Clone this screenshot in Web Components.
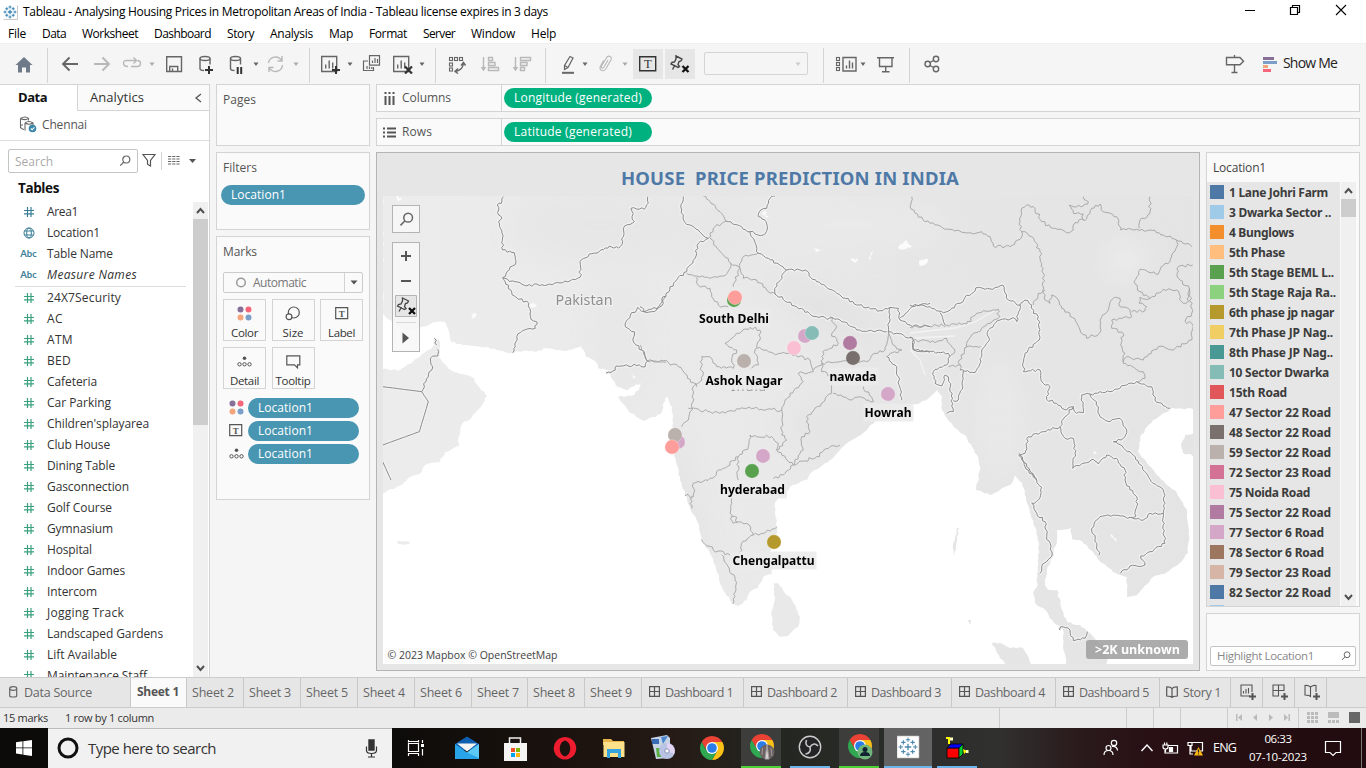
<!DOCTYPE html>
<html lang="en">
<head>
<meta charset="utf-8">
<title>Tableau - Analysing Housing Prices</title>
<style>
html,body{margin:0;height:768px;overflow:hidden}
body{font-family:"Open Sans","Noto Sans",sans-serif;font-size:12px;color:#333}
</style>
</head>
<body>
<desktop-app></desktop-app>
<script>
const define = (name, css, html, after) => customElements.define(name, class extends HTMLElement {
  constructor(){ super(); this.attachShadow({mode:'open'}); }
  connectedCallback(){
    this.shadowRoot.innerHTML = `<style>*{box-sizing:border-box}:host{display:block;box-sizing:border-box}svg{display:block;flex:none}${css}</style>` + (typeof html === 'function' ? html(this) : html);
    if (after) after(this);
  }
});
/* svg whose user space is the window's own pixel grid */
const ic = (x,y,w,h,inner,extra='') => `<svg width="${w}" height="${h}" viewBox="${x} ${y} ${w} ${h}" fill="none" stroke="#666" stroke-width="1.4" ${extra}>${inner}</svg>`;
/* flex row: each entry is [start, width, markup]; the gap before it becomes a margin */
const row = (start, list) => { let p = start; return list.map(([x,w,h,c=''])=>{ const m=x-p; p=x+w; return `<div class="c ${c}" style="width:${w}px;margin-left:${m}px">${h}</div>`; }).join(''); };
const t = (s,w,style='') => `<fit-text w="${w}" style="${style}">${s}</fit-text>`;

/* text tracked to an exact advance */
customElements.define('fit-text', class extends HTMLElement {
  constructor(){ super(); this.attachShadow({mode:'open'}).innerHTML='<style>:host{display:inline-block;white-space:pre;flex:none}</style><slot></slot>'; }
  connectedCallback(){
    const w=+this.getAttribute('w'), n=this.textContent.length; if(!w||!n) return;
    const r=this.getBoundingClientRect().width;
    this.style.letterSpacing=((w-r)/n).toFixed(3)+'px';
  }
});

const tableau = (cx,cy,s,c='#3b86b5') => { const p=(x,y,r,w)=>`<path stroke-width="${w}" d="M${cx+x-r} ${cy+y}h${2*r}M${cx+x} ${cy+y-r}v${2*r}"/>`;
  return `<g stroke="${c}">${p(0,0,2.2*s,1.3)}${[[0,-5],[0,5],[-5,0],[5,0]].map(a=>p(a[0]*s,a[1]*s,1.5*s,1)).join('')}${[[-3.2,-3.2],[3.2,-3.2],[-3.2,3.2],[3.2,3.2]].map(a=>p(a[0]*s,a[1]*s,1.5*s,1.1)).join('')}</g>`; };

define('title-bar', `:host{height:24px;background:#fff;display:flex;align-items:center;color:#000}.c{height:24px;display:flex;align-items:center}fit-text{margin-top:-2px}`, () => row(0,[
  [3,15,ic(3,4,15,15,`<path d="M3.5 18.5h14v-14" stroke="#c9c9c9" stroke-width="1"/>`+tableau(10,11,1))],
  [23,525,t('Tableau - Analysing Housing Prices in Metropolitan Areas of India - Tableau license expires in 3 days',525)],
  [1244,12,ic(1244,4,12,12,'<path d="M1245 10.5h10" stroke="#000" stroke-width="1"/>','style="margin-top:-4px"')],
  [1289,12,ic(1289,4,12,12,'<path d="M1290.5 7.500h7v7h-7zM1292.500 7v-1.500h7v7h-1.500" stroke="#000" stroke-width="1.200"/>','style="margin-top:-4px"')],
  [1335,12,ic(1335,4,12,12,'<path d="M1336 5l10 10m0-10l-10 10" stroke="#000" stroke-width="1.100"/>','style="margin-top:-4px"')]]));

define('menu-bar', `:host{height:19px;background:#fff;display:flex;gap:16px;padding-left:8px;color:#000;line-height:19px}`, () =>
  [['File',18],['Data',24],['Worksheet',56],['Dashboard',57],['Story',27],['Analysis',43],['Map',24],['Format',38],['Server',32],['Window',44],['Help',25]].map(a=>t(...a)).join(''));

const caret=(x,c='#666')=>ic(x-4,54,8,20,`<path d="M${x-2.5} 62.500h5l-2.500 3.500z" fill="${c}" stroke="none"/>`);
const tsep='<i></i>';
const chart=(x,y)=>`<path d="M${x} ${y}h15v15h-15zM${x+4} ${y+12}v-4M${x+7.500} ${y+12}v-8M${x+11} ${y+12}v-6"/>`;
const squares=a=>a.map(([x,y])=>`<rect x="${x}" y="${y}" width="3" height="3" stroke-width="1.100"/>`).join('');
const pin=(x,y)=>`<path d="M${x+4} ${y}l6 3-1 2-2 .5-1 3 1.500 2-1.500 1-7-3.500 1-1.500 2.500-.5 1.500-3zM${x+3} ${y+9}l-2.500 4.500"/><path d="M${x+10.500} ${y+10}l6 6m0-6l-6 6" stroke="#111" stroke-width="2.300"/>`;
define('tool-bar', `:host{height:41px;background:#f5f5f5;border-top:1px solid #efefef;display:flex}.c{height:40px;display:flex;align-items:center;justify-content:center;color:#222}
 i{width:1px;height:35px;background:#d4d4d4;margin-top:2px}.on{height:30px;background:#e6e6e6;margin-top:5px}.combo{height:23px;border:1px solid #d4d4d4;border-radius:2px;margin-top:8px;justify-content:flex-end;padding-right:5px}`, () => row(0,[
  [14,20,ic(14,54,20,20,'<path d="M24 57l8.500 8h-2.500v7.500h-4v-5h-4v5h-4v-7.500h-2.500z" fill="#6f7b89" stroke="none"/>')],
  [47,1,tsep],
  [60,20,ic(60,54,20,20,'<path d="M78 64h-15M69.500 57.500l-6.500 6.500 6.500 6.500" stroke-width="1.900"/>')],
  [92,20,ic(92,54,20,20,'<path d="M94 64h15M102.500 57.500l6.500 6.500-6.500 6.500" stroke="#b8b8b8" stroke-width="1.900"/>')],
  [121,22,ic(121,54,22,20,'<path d="M131 66.500h6.500q3 0 3-3t-3-3M128 66.500q-4.500 0-4.500-3.200t3.500-2.800h9M133.500 57.500l3 3-3 3" stroke="#b8b8b8"/>')],
  [148,8,caret(152.500,'#aaa')],
  [165,18,ic(165,54,18,20,'<path d="M166.700 56.700h14.800v14.800h-14.800zM169.700 71v-4.500h8v4.500M172.500 71v-2.500"/>')],
  [197,18,ic(197,54,18,20,'<ellipse cx="205" cy="58.500" rx="5" ry="2"/><path d="M200 58.500v10q0 2 4 2M210 58.500v6"/><path d="M205 70h8M209 66v8" stroke="#333" stroke-width="2"/>')],
  [228,18,ic(228,54,18,20,'<ellipse cx="235.500" cy="58.500" rx="5" ry="2"/><path d="M230.500 58.500v10q0 2 4 2M240.500 58.500v6"/><path d="M237.700 67v7M241.200 67v7" stroke="#333" stroke-width="2"/>')],
  [252,8,caret(256)],
  [266,19,ic(266,54,19,20,'<path d="M268.500 63a7 7 0 0 1 13-2.500M282.500 65a7 7 0 0 1-13 3M282 56v5h-4.500M269 72v-4.500h4.500" stroke="#b8b8b8"/>')],
  [292,8,caret(296,'#aaa')],
  [309,1,tsep],
  [320,21,ic(320,54,21,20,chart(321.700,56.500)+'<path d="M332 70h8M336 66v8" stroke="#333" stroke-width="2"/>')],
  [346,8,caret(350)],
  [362,19,ic(362,54,19,20,'<path d="M369.500 55.700h10v9.500h-10zM372.500 63v-2.500M375 63v-5M377.500 63v-4M368 61h-4.500v9.500h10V67M367 69v-3M369.500 69v-2.500M371.800 69v-2" stroke-width="1.200"/>')],
  [392,21,ic(392,54,21,20,chart(393.700,56.500)+'<path d="M405 66.500l7 7m0-7l-7 7" stroke="#333" stroke-width="2.200"/>')],
  [418,8,caret(422)],
  [435,1,tsep],
  [448,19,ic(448,54,19,20,squares([[449.500,57.500],[454.500,57.500],[459.500,57.500],[449.500,63],[449.500,68]])+'<path d="M463.500 63q-.5 7-8 8.500M461 65.500l2.500-3 2 3M458 68.500l-3 3 3 2"/>')],
  [480,20,ic(480,54,20,20,'<path d="M483.500 57v12.500M481.500 67l2 3 2-3M488.500 57.500h4v3h-4zM488.500 62.500h6.500v3h-6.500zM488.500 67.500h10v3h-10z" stroke="#b8b8b8"/>')],
  [512,20,ic(512,54,20,20,'<path d="M515.500 57v12.500M513.500 67l2 3 2-3M520.500 57.500h10v3h-10zM520.500 62.500h6.500v3h-6.500zM520.500 67.500h4v3h-4z" stroke="#b8b8b8"/>')],
  [545,1,tsep],
  [560,16,ic(560,54,16,20,'<path d="M570 56.500l3 1.500-5 9.500-3.500 2v-4zM564.500 65.500l3.500 2" stroke-width="1.200"/><path d="M562 72.800h12" stroke-width="2"/>')],
  [581,8,caret(585)],
  [598,15,ic(598,54,15,20,'<path d="M608 60l-4 7q-1 1.500-2 1t-.5-2l5.500-9q1.500-1.500 3.200-.5t1 3l-5.500 9.500q-1.700 2.500-4 1.500t-1.500-4l3.500-6" stroke="#b8b8b8" stroke-width="1.100"/>')],
  [621,8,caret(625,'#aaa')],
  [633,30,ic(638,55,20,18,'<path d="M639.700 56.700h16v14h-16z" stroke="#333"/><text x="647.700" y="68.300" font-family="Liberation Serif" font-size="12.500" text-anchor="middle" fill="#333" stroke="none">T</text>'),'on'],
  [665,30,ic(670,54,20,20,`<g stroke="#444">${pin(672,56)}</g>`),'on'],
  [704,104,caret(800,'#ccc'),'combo'],
  [823,1,tsep],
  [835,22,ic(835,54,22,20,squares([[836.500,57.500],[836.500,62.500],[836.500,67.500]])+'<path d="M843 57.500h13v13.500h-13zM846.500 68.500v-3M849.500 68.500v-8M852.500 68.500v-6"/>')],
  [859,8,caret(863)],
  [876,20,ic(876,54,20,20,'<path d="M877 57.800h17M879.500 58v8.500h12.500V58M885.700 67v5M882 71.800h7.500"/>')],
  [909,1,tsep],
  [924,16,ic(924,54,16,20,'<circle cx="927.700" cy="64" r="2.700"/><circle cx="936" cy="59" r="2.700"/><circle cx="936" cy="69" r="2.700"/><path d="M930 62.500l3.500-2M930 65.500l3.500 2"/>','stroke-linecap="round"')],
  [1225,20,ic(1225,54,20,20,'<path d="M1226.500 57.500h13.500l3.500 3.700-3.500 3.500h-13.500zM1234.500 55v2.500M1234.500 65v8M1231.500 72.500h6"/>')],
  [1263,14,ic(1263,55,14,17,'<g stroke="none"><path fill="#876f97" d="M1263 56h11v3h-11z"/><path fill="#7c9fca" d="M1263 60h14v3h-14z"/><path fill="#f5a57c" d="M1263 64h5v3h-5z"/><path fill="#f6657a" d="M1263 68h8v3h-8z"/></g>')],
  [1283,54,t('Show Me',54,'font-size:14px;margin-top:-3px')]]));

const hash=c=>`<svg width="12" height="12" viewBox="0 0 12 12" fill="none" stroke="${c}" stroke-width="1.200"><path d="M4.500 1v10M8 1v10M1 4.500h10M1 7.800h10"/></svg>`;
const globe='<svg width="12" height="12" viewBox="0 0 12 12" fill="none" stroke="#3a7e98"><circle cx="6" cy="6" r="5"/><ellipse cx="6" cy="6" rx="2.300" ry="5"/><path d="M1.500 4h9M1.500 8h9"/></svg>';
const abc='<span style="font:bold 9.500px Lato,sans-serif;color:#3a7e98">Abc</span>';
define('field-row', `:host{height:21px;display:flex;align-items:center;color:#333}.i{width:17px;display:flex;justify-content:center;margin:0 10px 0 20px}`, h=>{
  const k=h.getAttribute('kind'); return `<div class="i">${k=='geo'?globe:k=='abc'?abc:hash(k=='dim'?'#3a7e98':'#3aa17e')}</div><slot></slot>`});
const fr=(k,s,w,st='')=>`<field-row kind="${k}">${t(s,w,st)}</field-row>`;
define('scroll-bar', `:host{background:#f0f0f0;display:flex;flex-direction:column}.t{background:#cdcdcd}`, h=>`<svg width="15" height="17"><path d="M4 11l3.500-4 3.500 4" fill="none" stroke="#505050" stroke-width="2"/></svg><div class="t" style="height:${h.getAttribute('thumb')}px"></div><svg style="margin-top:auto" width="15" height="17"><path d="M4 6l3.500 4L11 6" fill="none" stroke="#505050" stroke-width="2"/></svg>`);
const lens=(s=12)=>`<svg width="${s}" height="${s}" viewBox="0 0 12 12" fill="none" stroke="#666" stroke-width="1.200"><circle cx="7.300" cy="4.500" r="3.500"/><path d="M4.800 7L1.200 10.700"/></svg>`;

define('data-pane', `:host{width:210px;height:593px;border-right:1px solid #d4d4d4;border-top:1px solid #d4d4d4;background:#fff;display:flex;flex-direction:column;overflow:hidden}
 .tabs{display:flex;height:26px;font-size:13px;line-height:25px;flex:none;color:#333}.a{width:77px;padding-left:18px;font-weight:700;color:#111}.b{flex:1;border-left:1px solid #d4d4d4;border-bottom:1px solid #d4d4d4;background:#fafafa;padding-left:12px;display:flex;align-items:center}
 .ds{height:30px;border-bottom:1px solid #dedede;display:flex;align-items:center;padding:0 0 2px 19px;gap:5px;flex:none;color:#555}
 .s{display:flex;align-items:center;padding:8px 0 0 8px;height:32px;flex:none}.box{width:130px;height:24px;border:1px solid #c4c4c4;border-radius:2px;display:flex;align-items:center;padding:0 6px 0 6px;justify-content:space-between;color:#aaa}
 h3{margin:0;font-size:13.500px;line-height:31px;padding-left:18px;color:#111;height:29px;flex:none}
 .w{display:flex;height:475px;flex:none}.l{width:193px;overflow:hidden}.l field-row:first-child{margin-top:-1px}hr{border:0;height:1px;background:#dcdcdc;margin:1px 7px 0 15px}scroll-bar{width:15px}`, () => `
 <div class="tabs"><div class="a">${t('Data',29)}</div><div class="b">${t('Analytics',54)}<svg width="8" height="10" style="margin-left:50px"><path d="M7 1L2 5l5 4" fill="none" stroke="#555" stroke-width="1.300"/></svg></div></div>
 <div class="ds">${ic(19,117,18,17,'<path d="M20.500 119.500q5-3 8 0v2M20.500 119.500v9q2 2 3.500 2M20.500 119.500q4 2 7 .500M25 124q4-3 8 0v4M25 124q4 2.500 8 0M25 124v7.500M21 126h2" stroke-width="1.100"/><circle cx="32.500" cy="129.500" r="3.800" fill="#3a87a6" stroke="none"/><path d="M30.800 129.500l1.300 1.300 2.300-2.500" stroke="#fff" stroke-width="1.100"/>')}${t('Chennai',45)}</div>
 <div class="s"><div class="box">${t('Search',38)}${lens(12)}</div><svg width="14" height="14" viewBox="0 0 14 14" style="margin-left:4px;margin-top:-2px"><path d="M1 1.500h12L8.500 7.500v5.500l-3-1.800V7.500z" fill="none" stroke="#555" stroke-width="1.200"/></svg><svg width="40" height="18" style="margin-left:5px;margin-top:-1px"><path d="M.5 0v18" stroke="#d4d4d4"/><path d="M7 4.500h12M7 7h12M7 9.500h12M7 12h12" stroke="#666" stroke-dasharray="3.200 1" stroke-width="1.200"/><path d="M28 7h7l-3.500 4z" fill="#555"/></svg></div>
 <h3>${t('Tables',41)}</h3>
 <div class="w"><div class="l">${fr('dim','Area1',31)}${fr('geo','Location1',53)}${fr('abc','Table Name',66)}${fr('abc','<em>Measure Names</em>',90)}<hr>${[['24X7Security',74],['AC',16],['ATM',26],['BED',24],['Cafeteria',50],['Car Parking',64],["Children'splayarea",102],['Club House',63],['Dining Table',68],['Gasconnection',82],['Golf Course',65],['Gymnasium',66],['Hospital',45],['Indoor Games',78],['Intercom',50],['Jogging Track',77],['Landscaped Gardens',116],['Lift Available',70],['Maintenance Staff',100]].map(a=>fr('m',...a)).join('')}</div><scroll-bar thumb="206"></scroll-bar></div>`);

const dots4=(s=1)=>`<svg width="${15*s}" height="${15*s}" viewBox="0 0 15 15"><circle cx="3.500" cy="3.500" r="3" fill="#876f97"/><circle cx="11.500" cy="3.500" r="3" fill="#f6657a"/><circle cx="3.500" cy="11.500" r="3" fill="#f5a57c"/><circle cx="11.500" cy="11.500" r="3" fill="#7c9fca"/></svg>`;
const label='<svg width="14" height="13"><path d="M.7.700h12v11h-12z" fill="none" stroke="#555" stroke-width="1.200"/><text x="6.800" y="9.500" font-size="9" font-family="Liberation Serif" text-anchor="middle" font-weight="bold" fill="#555">T</text></svg>';
const detail='<svg width="15" height="11" fill="none" stroke="#555"><circle cx="7.500" cy="2.200" r="1.800" fill="#555" stroke="none"/><circle cx="2.500" cy="8.300" r="1.700"/><circle cx="7.500" cy="8.300" r="1.700"/><circle cx="12.500" cy="8.300" r="1.700"/></svg>';
const sizeI='<svg width="16" height="15" fill="none" stroke="#555" stroke-width="1.200"><circle cx="8.800" cy="6.500" r="5.500"/><circle cx="4" cy="10.800" r="2.900" fill="#fafafa"/></svg>';
const tip='<svg width="15" height="14" fill="none" stroke="#555" stroke-width="1.200"><path d="M.8.800h13v9h-2.300v3l-3-3H.8z"/></svg>';
define('shelf-pill', `:host{height:20px;border-radius:10px;background:#4996b2;color:#fff;line-height:19px;padding-left:11px}`, '<slot></slot>');
define('side-card', `:host{background:#fafafa;border:1px solid #d4d4d4;padding:6px 0 0 6px;color:#555}.h{height:19px;line-height:18px}`, h=>`<div class="h"><slot name="title"></slot></div><slot></slot>`);
define('mark-button', `:host{width:43px;height:42px;border:1px solid #d4d4d4;background:#fafafa;color:#333;display:flex;flex-direction:column;align-items:center}.i{height:27px;display:flex;align-items:center}.l{line-height:11px}`, '<div class="i"><slot name="icon"></slot></div><div class="l"><slot></slot></div>');
const mb=(i,s,w)=>`<mark-button><span slot="icon">${i}</span>${t(s,w,'font-size:11.500px')}</mark-button>`;
define('cards-column', `:host{width:154px;display:flex;flex-direction:column;gap:6px}shelf-pill{width:144px;margin:7px 0 0 -2px;padding-left:10px}.sel{margin-top:10px;width:140px;height:21px;border:1px solid #ccc;border-radius:2px;display:flex;align-items:center}.sel b{width:18px;height:19px;border-left:1px solid #d4d4d4;margin-left:auto;display:flex;align-items:center;justify-content:center}
 .g{display:grid;grid-template-columns:43px 43px 43px;gap:6px 5.500px;margin-top:6px}.r{display:flex;align-items:center;height:23px}.r .i{width:26px;display:flex;justify-content:center}.r shelf-pill{width:111px;margin:0 0 0 -1px;padding-left:10px}.rows{margin-top:7px}`, () => `
 <side-card style="height:62px">${`<span slot="title">${t('Pages',33)}</span>`}</side-card>
 <side-card style="height:78px"><span slot="title">${t('Filters',34)}</span><shelf-pill>${t('Location1',55)}</shelf-pill></side-card>
 <side-card style="height:264px"><span slot="title">${t('Marks',34)}</span>
 <div class="sel"><svg width="12" height="12" style="margin:0 6px 0 11px"><circle cx="6" cy="5.500" r="4.300" fill="none" stroke="#999" stroke-width="1.500"/></svg>${t('Automatic',53,'color:#777')}<b><svg width="8" height="5"><path d="M.5.500h7L4 4.500z" fill="#555"/></svg></b></div>
 <div class="g">${mb(dots4(),'Color',27)}${mb(sizeI,'Size',21)}${mb(label,'Label',27)}${mb(detail,'Detail',29)}${mb(tip,'Tooltip',35)}</div>
 <div class="rows">${[dots4(),label,detail].map(i=>`<div class="r"><div class="i">${i}</div><shelf-pill>${t('Location1',55)}</shelf-pill></div>`).join('')}</div></side-card>`);

define('shelf-row', `:host{height:28px;border:1px solid #d4d4d4;background:#fafafa;display:flex;align-items:center;color:#555}.n{width:125px;height:26px;border-right:1px solid #d4d4d4;display:flex;align-items:center;gap:6px;padding-left:6px}.n fit-text{margin-top:-1px}shelf-pill{background:#00b180;width:148px;margin-left:2px;padding-left:10px}`, h=>{
  const c=h.getAttribute('kind')=='c'; return `<div class="n"><svg width="13" height="13" fill="none" stroke="#555" stroke-width="2">${c?'<path d="M2.500 0v2M2.500 4v9M6.500 0v2M6.500 4v9M10.500 0v2M10.500 4v9"/>':'<path d="M0 2.500h2M4 2.500h9M0 6.500h2M4 6.500h9M0 10.500h2M4 10.500h9"/>'}</svg>${c?t('Columns',49):t('Rows',30)}</div><shelf-pill>${c?t('Longitude (generated)',128,'font-size:12px'):t('Latitude (generated)',118)}</shelf-pill>`});

/* ---- map ---- */
let seed=7; const rnd=()=>{seed=(seed*16807)%2147483647;return seed/2147483647-.5};
function rough(pts,amp,close,step=2.5){
  const out=[]; if(close) pts=[...pts,pts[0]];
  for(let i=0;i<pts.length-1;i++){ const [x1,y1]=pts[i],[x2,y2]=pts[i+1],dx=x2-x1,dy=y2-y1,d=Math.hypot(dx,dy),n=Math.max(1,Math.round(d/step)); out.push([x1,y1]);
    for(let k=1;k<n;k++){const f=k/n,j=rnd()*amp*2;out.push([x1+dx*f-dy/d*j,y1+dy*f+dx/d*j]);} }
  out.push(pts[pts.length-1]);
  return 'M'+out.map(p=>p.map(v=>v.toFixed(1)).join(' ')).join('L')+(close?'Z':'');
}
const P=s=>s.trim().split(/\s+/).map(a=>a.split(',').map(Number));
const land=['383,190 383,314 393,323 405,331 419,328 436,322 445,322 449,332 451,342 466,345 486,347 508,353 523,351 536,352 546,348 563,351 581,346 585,353 586,357 596,362 598,368 609,370 611,377 618,387 626,390 641,383 639,390 631,396 618,397 629,412 644,421 661,414 665,398 668,397 672,407 673,423 673,437 674,453 680,477 688,503 698,523 702,540 712,557 722,587 732,603 738,606 747,600 750,592 758,588 763,577 772,574 772,563 770,552 777,533 775,503 790,487 807,480 812,472 830,460 847,443 863,433 870,425 882,417 903,407 920,403 930,397 937,390 942,397 942,410 948,420 955,428 965,435 972,447 977,455 980,470 976,490 990,495 1000,490 1012,483 1015,475 1022,483 1027,503 1035,527 1039,543 1038,570 1037,587 1033,593 1035,603 1043,608 1052,620 1063,630 1063,647 1067,670 1107,670 1107,650 1090,633 1080,625 1067,622 1062,610 1057,590 1048,590 1045,583 1047,570 1053,553 1057,540 1057,530 1071,528 1072,539 1082,541 1093,552 1102,563 1113,572 1127,577 1127,597 1137,595 1153,577 1167,572 1180,563 1188,553 1189,530 1187,510 1177,493 1157,475 1147,463 1138,452 1140,437 1153,420 1173,408 1196,409 1196,190',
 '1196,432 1185,435 1181,445 1183,453 1196,456',
 '380,369 400,370 418,358 434,345 438,338 440,345 438,357 449,369 460,374 472,377 480,388 487,396 480,408 472,417 462,424 458,440 459,446 445,452 440,462 425,465 420,474 410,477 402,485 380,494',
 '773,583 778,583 783,590 792,600 800,617 798,627 788,636 780,637 773,630 771,613 775,597',
 '992,643 1000,643 1010,648 1023,648 1033,668 1007,668 997,653',
 '957,528 959,528 956,546 953,557 953,545','397,541 410,542 409,544 398,544','968,620 971,620 970,625'];
const lakes=['902,244 906,240 912,246 906,249 898,248','850,260 858,258 855,263','869,258 873,251 868,263','919,261 928,259 925,265 920,266','472,315 476,313 474,321','529,302 537,306 532,308','631,373 637,377 633,379','757,212 767,212 762,216 769,217','1110,534 1119,542 1116,541','813,249 821,251 816,252','396,195 402,198 398,201','1094,451 1097,454 1093,455'];
const borders={
 '376,190':['382,20 376,40 364,45 368,75 378,85 368,95 378,130 380,180 415,188 420,215 380,263','380,263 445,286 520,282 560,278 612,262 612,215 640,192 670,185 700,168 728,174 740,155 742,115 775,95 765,55 805,58 817,40 815,20','380,263 415,318 458,340 465,388 482,395 478,415 440,422 422,440 418,470 410,488','690,550 718,540 720,528 790,524 808,530 815,512 798,480 775,460 775,425 748,410 750,395 785,352 805,365 850,352 870,318','20,590 137,605','137,605 150,575 160,545 170,530 163,505 185,498 185,478','175,445 182,465','137,605 157,635','157,635 130,725','130,725 20,765','20,815 45,870'],
 '640,190':['0,350 12,365 50,360 78,310 115,262 140,245 165,205 175,160 205,145 175,120 135,98 125,60 130,20','265,95 330,125 355,190 385,205 440,240 410,280 405,312','330,125 370,135 382,118 378,95 355,80 362,60 380,55 390,25 405,18','440,240 495,240 530,275 590,310 650,345 720,362 750,352 775,355','405,312 470,350 530,380 600,390 650,420 740,425','750,352 745,425 770,430 820,445','775,355 780,390 810,405 870,410','780,385 815,350 870,340','820,450 822,480 870,487','740,500 770,530 785,630'],
 '910,190':['0,345 60,350 100,368 150,340 165,322 205,292 240,297 278,285 295,330 330,345 345,330 365,345 370,370 385,380 388,450 345,490 340,545 390,540 400,580 420,590 410,628 440,640 470,660 490,650 500,670 520,668 515,615 540,612 600,605 650,585 680,575 725,590 735,630 780,655','330,345 320,380 320,395 310,383 270,390 235,420 235,455 215,480 215,500 195,548 150,540','90,368 105,405','0,440 10,450 10,480 115,490 120,500 110,525 70,545 75,580 95,588 105,555 115,560 128,640 130,665 110,670','160,542 158,590 145,630 130,632','490,650 465,680 450,710 400,725 355,740 345,790 330,795 350,830 380,870','450,710 465,745 490,745 495,790 488,835 550,808 565,822 590,795 620,805 645,840 645,870','540,612 565,650 570,680 600,695 630,685 650,720 640,745 610,755 660,785 720,868'],
 '900,430':['358,70 375,110 410,150 425,172 415,210 395,220 410,250 435,275 440,320 457,372 425,410 420,430','675,150 678,160 710,200 708,258 690,262 640,255 600,260 575,295 590,340 597,375','750,148 790,180 795,220 790,250 750,250 730,270 695,262','790,250 795,340 750,365 722,378 735,405 690,408 662,430','478,600 482,590 510,600 520,632 555,625 562,605']};
const states={
 '376,190':['815,512 870,517'],
 '640,190':['205,145 225,110 265,95 240,65 205,30 190,18','210,145 245,190 272,220 300,235 280,290','272,220 262,250 210,265 170,258 140,250','170,262 175,285 210,295 215,320 235,345 265,350','300,235 310,200 355,190','300,235 310,265 350,270 380,300 405,312','570,380 590,410 575,430 595,460 548,485 548,520 520,540','545,520 600,515 680,515 705,490 735,480 745,425','745,425 760,465 785,480 740,500','545,520 545,545 580,560 575,610 555,630 500,680 510,725 485,740 490,780 460,825','580,610 630,630 660,620 700,635 670,590','255,460 290,430 330,412 360,420 360,450 345,480 355,525 335,535','255,460 290,480 275,510 280,535 230,530 215,505 185,500 185,570 160,590 155,650','350,475 400,490 445,490 510,510 520,545 475,550 490,575 450,610 425,660','0,465 20,512 70,512 115,530 170,590','145,655 240,670 320,655 425,660 425,735 440,750 410,780','155,650 145,690 125,710','330,735 350,740 395,740 415,760 410,780 460,825','330,735 325,770 295,800 295,870','460,825 530,800 570,770 600,765','460,825 430,855 400,865'],
 '630,400':['165,287 190,290 190,250 240,235 280,205 325,170','185,290 185,325','300,290 305,310 300,340 310,370 350,370 370,405 335,430 330,465','305,350 320,352 322,370','370,405 400,400 440,382','215,418 250,450 300,465','275,465 295,500 315,540 315,590 308,612'],
 '910,190':['5,20 0,50 45,95 120,118 190,132 215,125 240,140 250,168 300,170 330,148 335,125 330,95 335,55 350,45 375,55 395,95 430,115 470,128 490,120 495,98 530,85 545,55 570,42 580,65 620,80 632,120 680,118 720,120 760,135 800,150 845,170','520,90 520,72 490,70 478,45 520,48 535,35 520,20','720,20 720,70 690,90 688,115','335,125 365,140 390,185 400,250 405,330 420,340 425,315 445,330 455,355 480,370 510,420 530,445 568,430 570,390 595,360 610,325 630,325 630,350 660,360 665,380 605,390 605,415 640,430 632,465 645,490 640,520 700,545 705,565 680,575','405,300 385,310 370,345','800,150 800,170 780,215 765,220 745,252 690,238 672,275 690,305 720,325 760,298 800,300 820,340 835,335 838,295 805,265 805,230 848,225','720,325 690,322 688,340 710,350 705,362 665,365','838,295 845,370 825,395 845,400 845,450 790,480 745,470 700,510 650,500 640,515','0,412 50,408 170,402 200,370 265,358','265,358 265,385 240,400 185,435 165,475','10,450 75,458 110,445 135,485 120,500','150,540 148,510 170,470 212,470','115,530 150,525']};
const straight=new Set(['20,590 137,605','137,605 157,635','157,635 130,725','130,725 20,765','20,815 45,870']);
const lines=(o,a)=>Object.entries(o).map(([k,l])=>{const [ox,oy]=k.split(',').map(Number);return l.map(s=>rough(P(s).map(([x,y])=>[ox+x/3,oy+y/3]),straight.has(s)?0:a)).join('')}).join('');
const marks=[[734,300,'#59a14f'],[735,297.500,'#ff9d9a'],[805,336,'#d4a6c8'],[812,333,'#86bcb6'],[794,348,'#fabfd2'],[744,361,'#bab0ac'],[850,343,'#b07aa1'],[853,358,'#79706e'],[888,394,'#d4a6c8'],[678,442,'#d4a6c8'],[675,435,'#bab0ac'],[672,447,'#ff9d9a'],[763,456,'#d4a6c8'],[752,471,'#59a14f'],[774,542,'#b6992d']];
const labels=[['South Delhi',734,318,70],['Ashok Nagar',744,380.500,77],['nawada',853,376.500,47],['Howrah',888,412.500,47],['hyderabad',752.500,489.500,65],['Chengalpattu',773.500,560.500,82]];
define('map-view', `:host{width:810px;height:468px;position:relative;overflow:hidden;background:#fff}
 .ctl{position:absolute;left:9px;width:28px;border:1px solid #b4b4b4;background:rgba(247,247,247,.9)}.find{top:9px;height:28px;display:flex;align-items:center;justify-content:center}.nav{top:46px;height:110px}
 .attr{position:absolute;left:2px;bottom:1px;height:15px;width:175px;background:rgba(250,250,250,.85);font-size:10.500px;line-height:14px;padding-left:2.500px;color:#444}
 .unk{position:absolute;right:5px;bottom:5px;width:102px;height:19px;border-radius:3px;background:rgba(160,160,160,.88);color:#fff;font-weight:700;font-size:12.500px;line-height:19px;padding-left:9px}`, ()=>{
  const L=land.map(s=>rough(P(s),.9,true,3)).join('');
  const C=lines(borders,1.400), S=lines(states,1.600);
  return `<svg width="810" height="468" viewBox="383 196 810 468">
  <defs><filter id="b" x="-40%" y="-40%" width="180%" height="180%"><feGaussianBlur stdDeviation="14"/></filter><clipPath id="k"><path d="${L}"/></clipPath>
  <linearGradient id="g"><stop offset="0" stop-color="#ececec"/><stop offset=".5" stop-color="#e9e9e9"/><stop offset=".65" stop-color="#e6e6e6"/><stop offset="1" stop-color="#e4e4e4"/></linearGradient></defs>
  <path d="${L}" fill="url(#g)"/>
  <g clip-path="url(#k)"><g filter="url(#b)"><ellipse cx="600" cy="225" rx="90" ry="35" fill="#e6e6e6"/><ellipse cx="620" cy="340" rx="25" ry="60" fill="#e7e7e7"/><ellipse cx="683" cy="500" rx="10" ry="70" fill="#e2e2e2" transform="rotate(-14 683 500)"/><ellipse cx="835" cy="425" rx="50" ry="22" fill="#e4e4e4"/><ellipse cx="720" cy="230" rx="40" ry="35" fill="#e6e6e6"/><ellipse cx="850" cy="225" rx="100" ry="25" fill="#e9e9e9"/><ellipse cx="1125" cy="260" rx="25" ry="20" fill="#ebebeb"/><ellipse cx="1000" cy="420" rx="20" ry="60" fill="#e9e9e9"/><ellipse cx="820" cy="306" rx="60" ry="9" fill="#dedede" transform="rotate(28 820 306)"/></g>
  <path d="M910 333l45-5 20-6 20-12M915 338l40-2M910 350l10 10 5 15" fill="none" stroke="#f3f3f3" stroke-width="1.300"/></g>
  <path d="${lakes.map(s=>rough(P(s),1.300,true)).join('')}" fill="#fbfbfb"/>
  <g fill="none" stroke-linejoin="round"><path d="${C}" stroke="#f1f1f1" stroke-width="3.500"/><path d="${S}" stroke="#9a9a9a" stroke-width=".8"/><path d="${C}" stroke="#8b8b8b" stroke-width="1"/></g>
  <g font-family="Noto Sans,sans-serif"><text x="393" y="218" font-size="14" fill="#ddd">Iran</text><text x="555.500" y="305" font-size="14" textLength="57" lengthAdjust="spacingAndGlyphs" fill="#8f8f8f" stroke="#efefef" stroke-width="2.500" paint-order="stroke">Pakistan</text><text x="731" y="391" font-size="13" textLength="35" fill="#999">India</text>
  ${marks.map(([x,y,c])=>`<circle cx="${x}" cy="${y}" r="7.200" fill="${c}" stroke="#fff" stroke-opacity=".35" stroke-width=".8"/>`).join('')}
  ${labels.map(([s,x,y,w])=>`<rect x="${x-w/2-1}" y="${y-9}" width="${w+3}" height="18" fill="#ebebeb" fill-opacity=".9"/><text x="${x-w/2}" y="${y+4.500}" font-size="12.500" font-weight="700" fill="#000" textLength="${w}" lengthAdjust="spacingAndGlyphs">${s}</text>`).join('')}</g></svg>
  <div class="ctl find">${lens(15)}</div>
  <div class="ctl nav"><svg width="26" height="108" viewBox="393 243 26 108" fill="none" stroke="#555"><path d="M401 256h10M406 251v10M401 281h10" stroke-width="2"/><path d="M395.500 295.500h21v21h-21z" fill="#e6e6e6" stroke="#b4b4b4"/><g stroke="#444" stroke-width="1.300" transform="translate(1.500 0)">${pin(397,298)}</g><path d="M396 322.500h20" stroke="#d9d9d9"/><path d="M402.500 332.500l6.500 5.500-6.500 5.500z" fill="#555" stroke="none"/></svg></div>
  <div class="attr">${t('© 2023 Mapbox © OpenStreetMap',170)}</div><div class="unk">${t('>2K unknown',85)}</div>`});

define('sheet-canvas', `:host{width:824px;height:519px;background:#e6e6e6;border:1px solid #b4b4b4;padding-left:6px}h1{margin:0;height:43px;line-height:50px;font-size:18.500px;color:#4e79a7;text-align:center;width:810px;padding-left:4px;font-family:"Noto Sans",sans-serif}`, ()=>`<h1>${t('HOUSE  PRICE PREDICTION IN INDIA',338)}</h1><map-view></map-view>`);

define('color-legend', `:host{width:154px;height:455px;border:1px solid #d4d4d4;background:#fafafa;color:#444}.h{height:29px;line-height:29px;padding-left:6px}.b{display:flex;height:424px}.l{width:133px;background:#e6e6e6;overflow:hidden}.r{display:flex;align-items:center;height:20px;gap:5px;padding-left:3px;font-weight:700;font-size:12px;color:#3c3c3c;font-family:"Noto Sans",sans-serif}.r i{width:14px;height:14px}scroll-bar{width:15px;margin-left:1px}`, ()=>`<div class="h">${t('Location1',53)}</div><div class="b"><div class="l">${[['#4e79a7','1 Lane Johri Farm',99],['#a0cbe8','3 Dwarka Sector ..',102],['#f28e2b','4 Bunglows',65],['#ffbe7d','5th Phase',56],['#59a14f','5th Stage BEML L..',105],['#8cd17d','5th Stage Raja Ra..',107],['#b6992d','6th phase jp nagar',105],['#f1ce63','7th Phase JP Nag..',104],['#499894','8th Phase JP Nag..',104],['#86bcb6','10 Sector Dwarka',100],['#e15759','15th Road',58],['#ff9d9a','47 Sector 22 Road',102],['#79706e','48 Sector 22 Road',102],['#bab0ac','59 Sector 22 Road',102],['#d37295','72 Sector 23 Road',102],['#fabfd2','75 Noida Road',81],['#b07aa1','75 Sector 22 Road',102],['#d4a6c8','77 Sector 6 Road',95],['#9d7660','78 Sector 6 Road',95],['#d7b5a6','79 Sector 23 Road',102],['#4e79a7','82 Sector 22 Road',102],['#a0cbe8','',0]].map(([c,s,w])=>`<div class="r"><i style="background:${c}"></i>${s?t(s,w):''}</div>`).join('')}</div><scroll-bar thumb="18"></scroll-bar></div>`);
define('highlight-card', `:host{width:154px;height:58px;border:1px solid #d4d4d4;background:#fafafa;padding:32px 3px 0}.x{height:20px;border:1px solid #c4c4c4;border-radius:2px;background:#fff;display:flex;align-items:center;justify-content:space-between;padding:0 4px 0 6px;color:#888;font-size:11.500px}fit-text{margin-top:-1px}`, ()=>`<div class="x">${t('Highlight Location1',97)}${lens(10)}</div>`);

define('work-area', `:host{height:593px;background:#f5f5f5;display:flex}.m{flex:1;display:flex;flex-direction:column;gap:6px;margin:0 6px}cards-column{margin-left:6px}.v{display:flex;gap:6px}.s{display:flex;flex-direction:column;gap:6px}`, `<data-pane></data-pane><cards-column></cards-column><div class="m"><shelf-row kind="c"></shelf-row><shelf-row></shelf-row><div class="v"><sheet-canvas></sheet-canvas><div class="s"><color-legend></color-legend><highlight-card></highlight-card></div></div></div>`);

const grid='<svg width="11" height="11" fill="none" stroke="#555" stroke-width="1.200" style="margin-top:-2px"><path d="M.6.600h9.800v9.800H.6zM5.500 0v11M0 5.500h11"/></svg>';
const book='<svg width="12" height="12" fill="none" stroke="#555" stroke-width="1.200" style="margin-top:-2px"><path d="M6 2.500Q3.500.500.700 1v9l4 .500L6 11.500l1.300-1 4-.5V1Q8.500.500 6 2.500v9"/></svg>';
const plus='<path d="M9 12.500h7M12.500 9v7" stroke="#555" stroke-width="2"/>';
define('sheet-tabs', `:host{height:31px;background:#e6e6e6;border-top:1px solid #ccc;border-bottom:1px solid #ccc;display:flex;color:#666}.c{height:29px;border-right:1px solid #c8c8c8;display:flex;align-items:center;gap:5px;padding-left:5px;font-size:12.500px}.c.src{padding-left:9px;gap:6px}.on{background:#fafafa;font-weight:700;font-size:12px;color:#555;padding:0 0 2px 6px}.n{padding-left:9px}`, ()=>{
 let x=0; const a=[[131,`<svg width="9" height="12" fill="none" stroke="#666" stroke-width="1.200" style="margin-top:-2px"><ellipse cx="4.200" cy="2.500" rx="3.500" ry="1.800"/><path d="M.7 2.500v7.500q0 1 3.500 1t3.500-1V2.500"/></svg>`+t('Data Source',68),'src'],[187,t('Sheet 1',42),'on']];
 [[2,244],[3,301],[5,358],[4,415],[6,472],[7,528],[8,585],[9,642]].forEach(([n,e])=>a.push([e,t('Sheet '+n,42)]));
 [744,848,952,1056,1160].forEach((e,i)=>a.push([e,'<span style="width:2px;margin-right:-5px"></span>'+grid+t('Dashboard '+(i+1),i?70:68)]));
 a.push([1231,'<span style="width:1px;margin-right:-5px"></span>'+book+t('Story 1',38)]);
 a.push([1263,`<svg width="17" height="17" fill="none" stroke="#555"><path d="M10 12H1V1h11v7M3.500 9.500V7M6 9.500V5M8.500 9.500V4" stroke-width="1.100"/>${plus}</svg>`,'n']);
 a.push([1295,`<svg width="17" height="17" fill="none" stroke="#555"><path d="M7 12H1V1h11v6M6.500 1v11M1 6.500h11" stroke-width="1.100"/>${plus}</svg>`,'n']);
 a.push([1327,`<svg width="17" height="17" fill="none" stroke="#555"><path d="M6.500 3Q4 1 1 1.500V11l4 .5 1.500 1V3Q9 1 12 1.500V8" stroke-width="1.100"/>${plus}</svg>`,'n']);
 return a.map(([e,h,c=''])=>{const w=e-x;x=e;return `<div class="c ${c}" style="width:${w}px">${h}</div>`}).join('')});

define('status-bar', `:host{height:20px;background:#ebebeb;display:flex;color:#333;font-size:11px}.c{height:20px;display:flex;align-items:center}.s{background:#ccc}fit-text{margin-top:-1px}`, ()=>row(0,[[3,46,t('15 marks',45)],[65,90,t('1 row by 1 column',89)],[999,1,'','s'],[1126,1,'','s'],[1153,1,'','s'],[1180,1,'','s'],[1227,1,'','s'],
 [1235,56,ic(1235,710,56,16,'<path d="M1236 714h1.500v7h-1.500zM1242 714v7l-4-3.500zM1257 714v7l-4-3.500zM1269 714v7l4-3.500zM1284 714v7l4-3.500zM1288.500 714h1.500v7h-1.500z" fill="#bbb" stroke="none"/>')],[1298,1,'','s'],
 [1307,54,ic(1307,710,54,16,'<g stroke="none" fill="#bbb"><path d="M1307 712h3v3h-3zM1311 712h3v3h-3zM1315 712h3v3h-3zM1307 716h3v3h-3zM1311 716h3v3h-3zM1315 716h3v3h-3zM1307 720h3v3h-3zM1311 720h3v3h-3zM1315 720h3v3h-3zM1328 712h11v6h-11zM1328 720h3v3h-3zM1332 720h3v3h-3zM1336 720h3v3h-3z"/><path d="M1349 712h11v11h-11z" fill="#666"/></g>')]]));

const chrome=(cx,cy,r)=>{const p=a=>[cx+r*Math.cos(a*Math.PI/180),cy+r*Math.sin(a*Math.PI/180)].map(v=>v.toFixed(2)).join(' '),q=a=>[cx+r*.5*Math.cos(a*Math.PI/180),cy+r*.5*Math.sin(a*Math.PI/180)].map(v=>v.toFixed(2)).join(' ');
 return `<g stroke="none"><path fill="#ea4335" d="M${p(210)}A${r} ${r} 0 0 1 ${p(330)}L${q(270)}L${q(150)}Z"/><path fill="#fbc116" d="M${p(330)}A${r} ${r} 0 0 1 ${p(90)}L${q(30)}L${q(270)}Z"/><path fill="#30a852" d="M${p(90)}A${r} ${r} 0 0 1 ${p(210)}L${q(150)}L${q(30)}Z"/><circle cx="${cx}" cy="${cy}" r="${r*.5}" fill="#fff"/><circle cx="${cx}" cy="${cy}" r="${r*.4}" fill="#2a7de9"/></g>`};
define('task-bar', `:host{height:40px;display:flex;background:linear-gradient(90deg,#0c0b0a 0,#0e0c0a 400px,#1a120e 560px,#261b16 680px,#23251f 760px,#2b2d2b 900px,#30302f 1000px,#2a1a1b 1080px,#281014 1150px,#210b0e 1366px);color:#fff}.c{height:40px;display:flex;align-items:center}.q{background:#f1f1f1;border-top:1px solid #bbb;color:#333;font-size:15px}.q fit-text{margin-top:-2px}.g{background:#3d3e3c;border-bottom:2px solid #4cd137}.u{border-bottom:2px solid #6cb4ea}.t{background:#636363;border-bottom:2px solid #6cb4ea}.k{flex-direction:column;justify-content:center;line-height:18px;font-size:11.500px;padding-bottom:1px}.e{background:#777}`, ()=>row(0,[
 [16,16,ic(16,740,16,16,'<path d="M16 742.300l6.500-1v6.200H16zM23.300 741.200L32 740v7.500h-8.700zM16 748.300h6.500v6.200L16 753.500zM23.300 748.300H32v7.700l-8.700-1.200z" fill="#fff" stroke="none"/>')],
 [48,344,row(48,[[57,22,ic(57,737,22,22,'<circle cx="68" cy="748" r="9" stroke="#111" stroke-width="3"/>','style="margin-top:-1px"')],[88,130,t('Type here to search',128)],[365,13,ic(365,739,13,19,'<path d="M369 740h5v10h-5z" fill="#333" stroke="#333"/><path d="M366.500 746.500v4q0 3 5 3t5-3v-4M371.500 754v3M368 757h7" stroke="#333" stroke-width="1.200"/>')]]),'q'],
 [407,18,ic(407,739,18,18,'<path d="M408.500 743.500h10v8h-10zM408.500 740v2.500M408 741.500h11M418.500 740v2.500M408.500 756v-2.500h10v2.500M422.500 740v3M422.500 749v6.500M421 745.500h3" stroke="#fff" stroke-width="1.200"/><path d="M421 744h3v3h-3z" fill="#fff" stroke="none"/>')],
 [455,24,ic(455,736,24,24,'<g stroke="none"><path d="M455 744l12-7.500 12 7.500v6h-24z" fill="#0f5fb0"/><path d="M457 743.500h20l-10 8z" fill="#f3f3f3"/><path d="M455 744l12 8.500 12-8.500v15h-24z" fill="#29a4e8"/><path d="M467 752.500l12-8.500v14z" fill="#5cc8f5"/></g>')],
 [504,23,ic(504,735,23,25,'<path d="M509.500 745v-8h11v8" stroke="#eee" stroke-width="1.500"/><path d="M504 742h23v18h-23z" fill="#f4f4f4" stroke="none"/><g stroke="none"><path d="M511 747h4v4h-4z" fill="#f25022"/><path d="M516 747h4v4h-4z" fill="#7fba00"/><path d="M511 752h4v4h-4z" fill="#00a4ef"/><path d="M516 752h4v4h-4z" fill="#ffb900"/></g>')],
 [553,24,ic(553,736,24,24,'<path fill-rule="evenodd" d="M565 737a11.300 11.300 0 1 0 .01 0zM565 740.500c7 2 7 14 0 16-7-2-7-14 0-16z" fill="#ed1c2e" stroke="none"/>')],
 [603,23,ic(603,736,23,24,'<g stroke="none"><path d="M603 739h8l2 2h11v4h-21z" fill="#e8b64c"/><path d="M603.500 742h21v15h-21z" fill="#fde08a"/><path d="M607 749h14v9h-3v-5h-8v5h-3z" fill="#35a3e0"/></g>')],
 [649,26,ic(649,735,26,26,'<g stroke="none"><path d="M651 738l16-3 3 3v20l-14 1z" fill="#c6d4e6"/><path d="M652 739h7v5h-7z" fill="#3a6bb5"/><path d="M661 737l7-1-5 8z" fill="#4e86cf"/><path d="M656 748h6v9h-5z" fill="#58b043"/><circle cx="667" cy="751" r="8" fill="#b9c3e3"/><path d="M667 743a8 8 0 0 1 7 11l-7-3z" fill="#e2d4f2"/><circle cx="667" cy="751" r="2.200" fill="#fff" stroke="#8292b8" stroke-width="1"/></g>')],
 [700,24,ic(700,736,24,24,chrome(712,748,12))],
 [741,40,'<span style="width:9px"></span>'+ic(750,736,26,26,chrome(762,748,12)+'<circle cx="767" cy="754" r="7.500" fill="#6b6261" stroke="none"/><path d="M767 747l-2 14h4zM771 750l1 8M762.500 750l-.5 7" fill="#d6d2d2" stroke="#a09a9a" stroke-width="1"/>'),'g'],
 [790,40,'<span style="width:8px"></span>'+ic(798,736,24,24,'<circle cx="810" cy="748" r="10.700" fill="#242326" stroke="#ccc"/><path d="M810 748q-5.500-1-3.500-7M810 748q4-5.500 8-1M810 748q1.500 6-4.500 7" stroke="#c8c8c8" stroke-width="1.600"/>'),'u'],
 [839,40,'<span style="width:9px"></span>'+ic(848,736,26,26,chrome(860,748,12)+'<circle cx="865" cy="754" r="7.500" fill="#6fb57c" stroke="none"/><circle cx="865" cy="751.500" r="2.500" fill="#123" stroke="none"/><path d="M860 758q0-4 5-4t5 4z" fill="#123" stroke="none"/>'),'g'],
 [884,48,'<span style="width:13px"></span>'+ic(897,736,23,24,'<path d="M897 737h22v22h-22z" fill="#fff" stroke="#bbb" stroke-width=".6"/>'+tableau(908,748,1.450,'#4a86ad')),'t'],
 [937,40,'<span style="width:8px"></span>'+ic(945,735,26,24,'<g stroke="#000" stroke-width=".8"><path d="M947 748h12v10h-12z" fill="#f00"/><path d="M947 748l4-4h12l-4 4z" fill="#00f"/><path d="M959 748l4-4v10l-4 4z" fill="#0c3"/></g><path d="M946 737h4v2h-4zM948 739h2v5h-2zM963 749l4 2-3 3z" fill="#ff0" stroke="none"/><path d="M950 737.500h3v3h-3M966 750h2.500v3h-2.500" fill="#ffb" stroke="none"/>'),'u'],
 [1103,16,ic(1103,739,16,18,'<g stroke="#fff" stroke-width="1.200"><circle cx="1114" cy="743" r="2.700"/><circle cx="1108.500" cy="748" r="2.500"/><path d="M1104 755q0-4.500 4.500-4.500t4.500 4.500M1112 746.500q5-.5 5.500 4"/></g>')],
 [1140,14,ic(1140,742,14,12,'<path d="M1141.500 751l5.500-6 5.500 6" stroke="#fff"/>')],
 [1162,17,ic(1162,740,17,14,'<g stroke="#fff" stroke-width="1.200"><path d="M1168 744.500h9.500v7.500H1165v-3"/><path d="M1169.500 746.500h3v4h-3z" fill="#fff"/><path d="M1163 744h5v2q0 2-2.500 2t-2.500-2zM1164.500 741.500v2M1166.800 741.500v2M1165.500 748v3"/></g>')],
 [1187,17,ic(1187,740,17,16,'<g stroke="#fff" stroke-width="1.200"><path d="M1191 742.500h11.500v8.500h-11.500v-5M1188 742.500h4v3h-4zM1190 746v8h3M1195 754.500h3"/></g><path d="M1198.500 747l4.500 8.500h-9z" fill="#fdb913" stroke="none"/><path d="M1198.500 749.500v3M1198.500 753.500v1" stroke="#222" stroke-width="1.200"/>')],
 [1213,24,t('ENG',23,'font-size:12.500px;margin-top:-1px')],
 [1248,60,t('06:33',27)+t('07-10-2023',58),'k'],
 [1324,18,ic(1324,739,18,18,'<path d="M1325.500 741.500h15v11h-4.500l-3 3-3-3h-4.500z" stroke="#fff" stroke-width="1.200"/>')],
 [1361,1,'','e']]));

define('desktop-app', `:host{width:1366px;height:768px;display:flex;flex-direction:column;overflow:hidden}:host>*{flex:none}`, '<title-bar></title-bar><menu-bar></menu-bar><tool-bar></tool-bar><work-area></work-area><sheet-tabs></sheet-tabs><status-bar></status-bar><task-bar></task-bar>');
</script>
</body>
</html>
